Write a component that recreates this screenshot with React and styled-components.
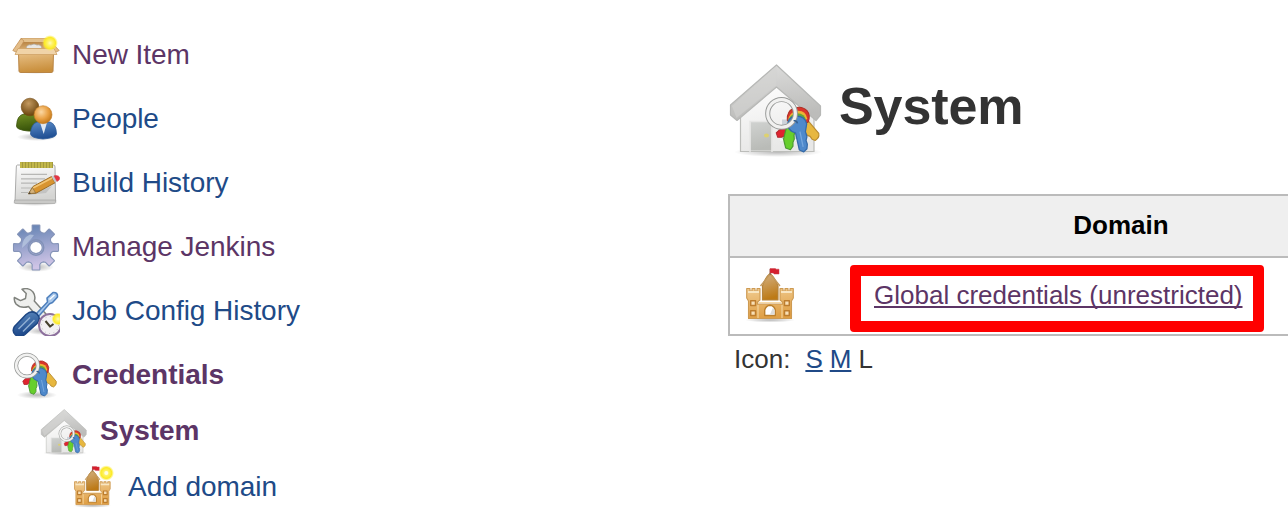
import React from "react";
import styled, { createGlobalStyle } from "styled-components";

const GlobalStyle = createGlobalStyle`
  html, body { margin: 0; background: #fff; overflow: hidden; }
  body { font-family: Helvetica, "Liberation Sans", Arial, sans-serif; color: #333; }
`;

const Page = styled.div`
  display: flex;
  width: 1288px;
  height: 526px;
  overflow: hidden;
`;

const SidePanel = styled.nav`
  flex: none;
  box-sizing: border-box;
  width: 728px;
  padding: 32px 12px 0;
`;

const Task = styled.div`
  display: flex;
  align-items: center;
  gap: 12px;
  height: 48px;
  margin-bottom: ${(p) => (p.$tight ? 8 : 16)}px;
  padding-left: ${(p) => (p.$level || 0) * 28}px;
`;

const TaskLink = styled.a`
  font-size: 28px;
  line-height: 32px;
  letter-spacing: -0.05px;
  padding-bottom: 2px;
  white-space: nowrap;
  color: ${(p) => (p.$visited ? "#5c3566" : "#204a87")};
  font-weight: ${(p) => (p.$current ? 700 : 400)};
`;

const Icon = styled.svg`
  display: block;
  flex: none;
  width: ${(p) => p.$w || 48}px;
  height: ${(p) => p.$h || p.$w || 48}px;
  filter: blur(0.55px);
`;

const Main = styled.main`
  flex: none;
  width: 760px;
  padding-top: 62px;
`;

const Heading = styled.header`
  display: flex;
  gap: 15px;
  height: 96px;
  margin-bottom: 36px;
`;

const Title = styled.h1`
  margin: 0;
  padding-top: 14px;
  font-size: 52px;
  line-height: 60px;
  letter-spacing: -0.1px;
  color: #333;
`;

const Table = styled.div`
  box-sizing: border-box;
  border: 2px solid #bbb;
`;

const Row = styled.div`
  display: grid;
  grid-template-columns: 134px 514px;
  height: ${(p) => p.$height}px;
`;

const HeaderRow = styled(Row)`
  background: #efefef;
  border-bottom: 2px solid #bbb;
`;

const HeaderCell = styled.div`
  grid-column: 2;
  text-align: center;
  font-size: 26px;
  line-height: 30px;
  padding-top: 14px;
  font-weight: 700;
  color: #000;
`;

const IconCell = styled.div`
  padding: 10px 0 0 16px;
`;

const Cell = styled.div`
  padding: 22px 0 0 10px;
  font-size: 26px;
  line-height: 30px;
`;

const DomainLink = styled.a`
  position: relative;
  display: inline-block;
  white-space: nowrap;
  color: #5c3566;
  text-decoration: underline;
  text-decoration-thickness: 2px;
  text-decoration-skip-ink: none;
  text-underline-offset: 2px;
`;

const Highlight = styled.span`
  position: absolute;
  left: -24px;
  top: -15px;
  box-sizing: border-box;
  width: 414px;
  height: 67px;
  border: 11px solid #f00;
  border-radius: 4px;
`;

const SizeBar = styled.div`
  display: flex;
  padding: 8px 0 0 6px;
  font-size: 26px;
  line-height: 30px;
  gap: 7px;
`;

const SizeLabel = styled.span`
  margin-right: 8px;
`;

const SizeLink = styled.a`
  color: #204a87;
  text-decoration: underline;
  text-decoration-thickness: 2px;
  text-underline-offset: 2px;
`;

function Gradients() {
  const list = [
    ["carton", "#e9c28a", "#c98f3c"],
    ["cartonIn", "#a9702f", "#d5a96c"],
    ["greenBody", "#739023", "#38530a"],
    ["blueBody", "#5b8cc8", "#1f4f93"],
    ["paper", "#fdfdfd", "#d4d4d2"],
    ["gearFill", "#5f80b1", "#cfc4e6"],
    ["roof", "#dededd", "#bcbcba"],
    ["wall", "#ffffff", "#e8e8e7"],
    ["door", "#d0d2d0", "#b9bbb7"],
    ["castleFill", "#f0cb90", "#df9f45"],
    ["tower", "#d3b184", "#bd7a16"],
    ["handle", "#5a88bd", "#1b4789"],
  ];
  return (
    <Icon $w={1} $h={1} style={{ position: "absolute" }} aria-hidden="true">
      <defs>
        {list.map(([id, a, b]) => (
          <linearGradient key={id} id={id} x1="0" y1="0" x2="0.2" y2="1">
            <stop offset="0" stopColor={a} />
            <stop offset="1" stopColor={b} />
          </linearGradient>
        ))}
        <radialGradient id="glow">
          <stop offset="0" stopColor="#fffbb8" />
          <stop offset=".3" stopColor="#fff36a" />
          <stop offset=".7" stopColor="#fcea27" />
          <stop offset="1" stopColor="#fff04a" stopOpacity="0" />
        </radialGradient>
        <radialGradient id="shade">
          <stop offset="0" stopColor="#000" stopOpacity=".28" />
          <stop offset="1" stopColor="#000" stopOpacity="0" />
        </radialGradient>
        <radialGradient id="brownBall" cx=".42" cy=".3" r=".65">
          <stop offset="0" stopColor="#c49a60" />
          <stop offset="1" stopColor="#714a13" />
        </radialGradient>
        <radialGradient id="orangeBall" cx=".4" cy=".35" r=".65">
          <stop offset="0" stopColor="#fbd8a4" />
          <stop offset=".6" stopColor="#e9a043" />
          <stop offset="1" stopColor="#c47a1b" />
        </radialGradient>
      </defs>
    </Icon>
  );
}

const BoxIcon = () => (
  <Icon viewBox="0 0 48 48">
    <ellipse cx="24" cy="39" rx="20" ry="3" fill="url(#shade)" />
    <path d="M9 6.5H36L40 17H5Z" fill="url(#cartonIn)" stroke="#c89a60" strokeWidth="1" />
    <path d="M10 6.5H35L36 10H9Z" fill="#e3c08c" />
    <path d="M14 16.5q1-4.5 5-3.5q3-2 6 0q4-1 5 3.5z" fill="#e9e7e3" stroke="#aaa298" strokeWidth=".7" />
    <path d="M9 6.5L.8 18.5L5 20.5L12 9Z M36 6.5L47.2 18.5L43 20.5L34 9Z" fill="#e4bd88" stroke="#c39259" strokeWidth=".8" />
    <path d="M6.5 20H41.5L41 39Q41 40.5 39 40.5H9Q7 40.5 7 39Z" fill="url(#carton)" stroke="#b98545" strokeWidth="1" />
    <path d="M6 16.5H42L45 22.5H3Z" fill="#f0d3a8" stroke="#cfa266" strokeWidth=".8" />
    <circle cx="38" cy="11" r="8" fill="url(#glow)" />
  </Icon>
);

const PeopleIcon = () => (
  <Icon viewBox="0 0 48 48">
    <ellipse cx="25" cy="41" rx="20" ry="4" fill="url(#shade)" />
    <path d="M4.5 30Q5 19 12 18H23Q29 20 28 35Q14 36 7 33Q4.5 32 4.5 30Z" fill="url(#greenBody)" stroke="#3c540d" strokeWidth=".8" />
    <circle cx="18" cy="11" r="8.8" fill="url(#brownBall)" stroke="#70460f" strokeWidth=".6" />
    <path d="M18.5 38Q19 28 25 26H38Q44 28 44.5 38Q44 42 31 43Q19 42 18.5 38Z" fill="url(#blueBody)" stroke="#2b5b99" strokeWidth=".8" />
    <path d="M28 26.5H35L31.7 38Z" fill="#dfe8f2" />
    <circle cx="31" cy="18.7" r="9" fill="url(#orangeBall)" stroke="#bd7925" strokeWidth=".6" />
  </Icon>
);

const NotepadIcon = () => (
  <Icon viewBox="0 0 48 48">
    <ellipse cx="23" cy="43" rx="23" ry="3" fill="url(#shade)" />
    <path d="M5.5 5H41.5Q43 5 43 7L43.6 41.5H3L4.3 7Q4.3 5 5.5 5Z" fill="url(#paper)" stroke="#a2a2a0" strokeWidth=".9" />
    <path d="M2.7 40H43.7V42.5Q43.5 43.5 42 43.5H4Q2 43.5 2.2 42Z" fill="#c9c9c7" stroke="#9c9c9a" strokeWidth=".6" />
    <path d="M8 5H41" stroke="#a39a3d" strokeWidth="6" />
    <path d="M9 2.2V8M12 2.2V8M15 2.2V8M18 2.2V8M21 2.2V8M24 2.2V8M27 2.2V8M30 2.2V8M33 2.2V8M36 2.2V8M39 2.2V8" stroke="#d8cb53" strokeWidth="1.2" />
    <path d="M9 14.3H35M9 18.8H33M9 23.2H25M9 28H22M9 32.5H16" stroke="#b7b7b5" strokeWidth="1.2" />
    <path d="M16.5 35L34 33L40 26Z" fill="#999" opacity=".35" />
    <path d="M16.5 33.8L21 26.5L39.5 16.5L43 22.8L24 33.2Z" fill="#d89430" stroke="#94651f" strokeWidth=".9" />
    <path d="M21 28L40 18" stroke="#f3c675" strokeWidth="1.5" />
    <path d="M16.5 33.8L20.5 27.5L23.5 32.9Z" fill="#d6b27a" stroke="#80683a" strokeWidth=".6" />
    <path d="M16.3 34l1.5-2 1 1.5z" fill="#333" />
    <path d="M39.5 16.5L42 15.8L45 21.5L43 22.8Z" fill="#c5c7c8" />
    <path d="M42 15.8Q47 14.6 47.8 18Q47.8 20.3 45 21.5Z" fill="#e63442" stroke="#c93a44" strokeWidth=".5" />
  </Icon>
);

const gearPath = (() => {
  const pts = [];
  for (let i = 0; i < 8; i++) {
    const c = (i * Math.PI) / 4;
    [[-0.3, 15.6], [-0.19, 17.2], [-0.15, 22.2], [0.15, 22.2], [0.19, 17.2], [0.3, 15.6]].forEach(([a, r]) => {
      pts.push(`${(24 + Math.sin(c + a) * r).toFixed(2)} ${(23.5 - Math.cos(c + a) * r).toFixed(2)}`);
    });
  }
  return `M${pts.join("L")}Z M24 16.8a6.7 6.7 0 1 0 .01 0Z`;
})();

const GearIcon = () => (
  <Icon viewBox="0 0 48 48">
    <ellipse cx="24" cy="43" rx="18" ry="5" fill="url(#shade)" />
    <path d={gearPath} fillRule="evenodd" fill="url(#gearFill)" stroke="#8594b8" strokeWidth="2.2" strokeLinejoin="round" />
    <path d={gearPath} fillRule="evenodd" fill="url(#gearFill)" />
    <circle cx="24" cy="23.5" r="7.8" fill="none" stroke="#8292b8" strokeWidth="1.4" />
    <path d="M10 24Q10 14 18 10.5L22 11Q18 17 10 24Z" fill="#c4d3e8" opacity=".6" />
  </Icon>
);

const ToolsIcon = () => (
  <Icon viewBox="0 0 48 48">
    <ellipse cx="30" cy="43" rx="16" ry="4" fill="url(#shade)" />
    <path d="M10 1.2Q17-.8 21 4Q24 8 22.3 13L42 35L36 41L16.5 18.5Q9 21 4 16Q1.8 13 2.4 9.5L8.5 12.6L13.5 10.5L14.2 5.5Z" fill="#eeefed" stroke="#80837e" strokeWidth="1.5" strokeLinejoin="round" />
    <path d="M24 26L35.5 14L35 10L41 4.5Q46 4 45.5 9L40.5 14.5L37.5 15.8L26.5 28.5Z" fill="#a9c8eb" stroke="#4f80bd" strokeWidth="1.6" strokeLinejoin="round" />
    <path d="M37.5 11.5L42.5 7" stroke="#fff" strokeWidth="1.3" />
    <path d="M14 26.5Q20 21.5 25 26Q29.5 30.5 25 35.5L13 46.5Q8 50 3.5 47Q-.5 43.5 2.5 38.5Z" fill="url(#handle)" stroke="#1d4683" strokeWidth="1.5" />
    <path d="M6.5 41L18 29.5M11 43.5L22.5 32" stroke="#8eaed2" strokeWidth="1.5" />
    <circle cx="38" cy="37" r="11" fill="#f3f1f3" stroke="#8d719d" strokeWidth="2" />
    <circle cx="38" cy="37" r="8.5" fill="none" stroke="#bcb8bc" strokeDasharray="1 3.4" />
    <path d="M38.5 39L33.5 33M37.5 39L41.5 36" stroke="#44402c" strokeWidth="2" />
    <circle cx="46" cy="31" r="6.5" fill="url(#glow)" />
  </Icon>
);

const Keys = () => (
  <g strokeLinejoin="round">
    <path d="M20 23L13 27L10.8 29L12 32.5L15 32.5L17 31.5L23 28Z" fill="#df2430" stroke="#b3282e" strokeWidth=".8" />
    <path d="M33 16L44.3 29.5Q45 33 41.5 35L39 34L37.5 31.8L35.5 31L28 23Z" fill="#e7b73f" stroke="#b98d32" strokeWidth=".9" />
    <path d="M19.5 19Q19 12 25 9.5Q31 7.5 35 11.5Q38 15 36 20.5L26 25Z" fill="#d9352b" stroke="#ad3026" strokeWidth=".8" />
    <path d="M20 19.5Q21 13 27 11.7Q34 11 35.3 18L26 25Z" fill="#edb334" />
    <path d="M20 20.5Q21 14.5 27 13.6Q33.5 13.5 34.5 20L26 26Z" fill="#5fa83b" />
    <path d="M19 24L26 26L24.8 31L25 34L24 36.5L24 39.5L22 42.3L18.3 41L17.3 37L16.6 34Z" fill="#67cf2c" stroke="#4c9931" strokeWidth=".9" />
    <path d="M20 24Q19 17 26 15.8Q33.5 15.5 34.8 22L33.8 28L35 32L34.3 35L35.3 38L35 41.5L32.5 44L29 42.5L26 29Q21.5 28 20 24Z" fill="#4e89cb" stroke="#356aa8" strokeWidth="1" />
    <path d="M29.5 28L32 40" stroke="#76a7de" strokeWidth="1" />
    <circle cx="15" cy="13.7" r="10.9" fill="none" stroke="#979997" strokeWidth="4" />
    <circle cx="15" cy="13.7" r="10.9" fill="none" stroke="#f1f1f0" strokeWidth="2.5" />
    <path d="M24.5 19.5Q27 19 27.5 21.5" fill="none" stroke="#345f91" strokeWidth="1.2" />
  </g>
);

const KeysIcon = () => (
  <Icon viewBox="0 0 48 48">
    <ellipse cx="25" cy="43" rx="20" ry="4" fill="url(#shade)" />
    <Keys />
  </Icon>
);

const HouseIcon = ({ size }) => (
  <Icon $w={size} viewBox="0 0 96 96">
    <ellipse cx="50" cy="90" rx="44" ry="5" fill="url(#shade)" />
    <path d="M12.5 48L48.5 20L86 48V89.5H12.5Z" fill="url(#wall)" stroke="#bcbdba" strokeWidth="1.2" />
    <path d="M22.5 60H43.5V88.5H22.5Z" fill="url(#door)" />
    <path d="M22 90V59.5H44V90" fill="none" stroke="#e6e6e5" strokeWidth="1.5" />
    <path d="M53 56.5H77V78H53Z" fill="#cdd3da" stroke="#f4f4f4" strokeWidth="2" />
    <ellipse cx="38.5" cy="73.5" rx="2.5" ry="2" fill="#ddd16f" />
    <path d="M48.5 3L92.5 44V53L88 58.5L48.5 25L9 58.5L2.5 53V43Z" fill="url(#roof)" stroke="#b7b8b6" strokeWidth="1.2" strokeLinejoin="round" />
    <path d="M4 44L48.5 4V23L8.5 56" fill="#d3d3d2" opacity=".6" />
    <g transform="translate(34.5 34) scale(1.27)"><Keys /></g>
  </Icon>
);

const Castle = () => (
  <g strokeLinejoin="round">
    <ellipse cx="24" cy="52" rx="25" ry="2.5" fill="url(#shade)" />
    <path d="M.7 20.5H4V23H6V20.5H9V23H11V20.5H14V32L11.5 34V36H36.5V34L34 32V20.5H37V23H39V20.5H42V23H44V20.5H47.3V30L45.5 33V50.5H2.5V33L.7 30Z" fill="url(#castleFill)" stroke="#cd9a52" strokeWidth="1.1" />
    <path d="M2 24H13M35 24H46" stroke="#f8e6c2" strokeWidth="2" />
    <path d="M16.5 18Q19 10 24 5.5Q29 10 32 18V32H16.5Z" fill="url(#tower)" stroke="#b5843d" strokeWidth="1.2" />
    <path d="M14.5 18L24.3 6L34 18" fill="none" stroke="#c49a5d" strokeWidth="1.4" />
    <path d="M24.2 1V7" stroke="#826c57" strokeWidth="1.2" />
    <path d="M24 .6H29.5L30 1.2H33V6H28L27.5 5H24Z" fill="#d51f2e" stroke="#c93f4b" strokeWidth=".5" />
    <path d="M4.7 32.7H9.5V37.5H4.7ZM38.5 32.7H43.3V37.5H38.5ZM4.7 42.7H9.5V47.5H4.7ZM38.5 42.7H43.3V47.5H38.5Z" fill="#f8dfb5" stroke="#bd7d2e" strokeWidth="1.5" />
    <path d="M12 34.5H36M12 50V37M36 50V37" stroke="#f7daa8" strokeWidth="1" />
    <path d="M18.7 47.5V42Q20 37.5 24 37.3Q28 37.5 29.3 42V47.5Z" fill="#fff" stroke="#bc802d" strokeWidth="1.4" />
    <path d="M27 39.5L28.5 42V46.5H24Z" fill="#dcdcda" />
  </g>
);

const CastleIcon = () => (
  <Icon $w={48} $h={55} viewBox="0 0 48 55"><Castle /></Icon>
);

const AddCastleIcon = () => (
  <Icon viewBox="0 0 48 48">
    <g transform="translate(6 2) scale(.765)"><Castle /></g>
    <circle cx="38.3" cy="9" r="7.8" fill="url(#glow)" />
    <circle cx="38.3" cy="9" r="2" fill="#fffde0" />
  </Icon>
);

export default function App() {
  return (
    <Page>
      <GlobalStyle />
      <Gradients />
      <SidePanel>
        <Task><BoxIcon /><TaskLink $visited>New Item</TaskLink></Task>
        <Task><PeopleIcon /><TaskLink>People</TaskLink></Task>
        <Task><NotepadIcon /><TaskLink>Build History</TaskLink></Task>
        <Task><GearIcon /><TaskLink $visited>Manage Jenkins</TaskLink></Task>
        <Task><ToolsIcon /><TaskLink>Job Config History</TaskLink></Task>
        <Task $tight><KeysIcon /><TaskLink $visited $current>Credentials</TaskLink></Task>
        <Task $tight $level={1}><HouseIcon size={48} /><TaskLink $visited $current>System</TaskLink></Task>
        <Task $tight $level={2}><AddCastleIcon /><TaskLink>Add domain</TaskLink></Task>
      </SidePanel>
      <Main>
        <Heading>
          <HouseIcon size={96} />
          <Title>System</Title>
        </Heading>
        <Table>
          <HeaderRow $height={60}>
            <HeaderCell>Domain</HeaderCell>
          </HeaderRow>
          <Row $height={76}>
            <IconCell><CastleIcon /></IconCell>
            <Cell>
              <DomainLink>
                Global credentials (unrestricted)
                <Highlight />
              </DomainLink>
            </Cell>
          </Row>
        </Table>
        <SizeBar>
          <SizeLabel>Icon:</SizeLabel>
          <SizeLink>S</SizeLink>
          <SizeLink>M</SizeLink>
          <span>L</span>
        </SizeBar>
      </Main>
    </Page>
  );
}
